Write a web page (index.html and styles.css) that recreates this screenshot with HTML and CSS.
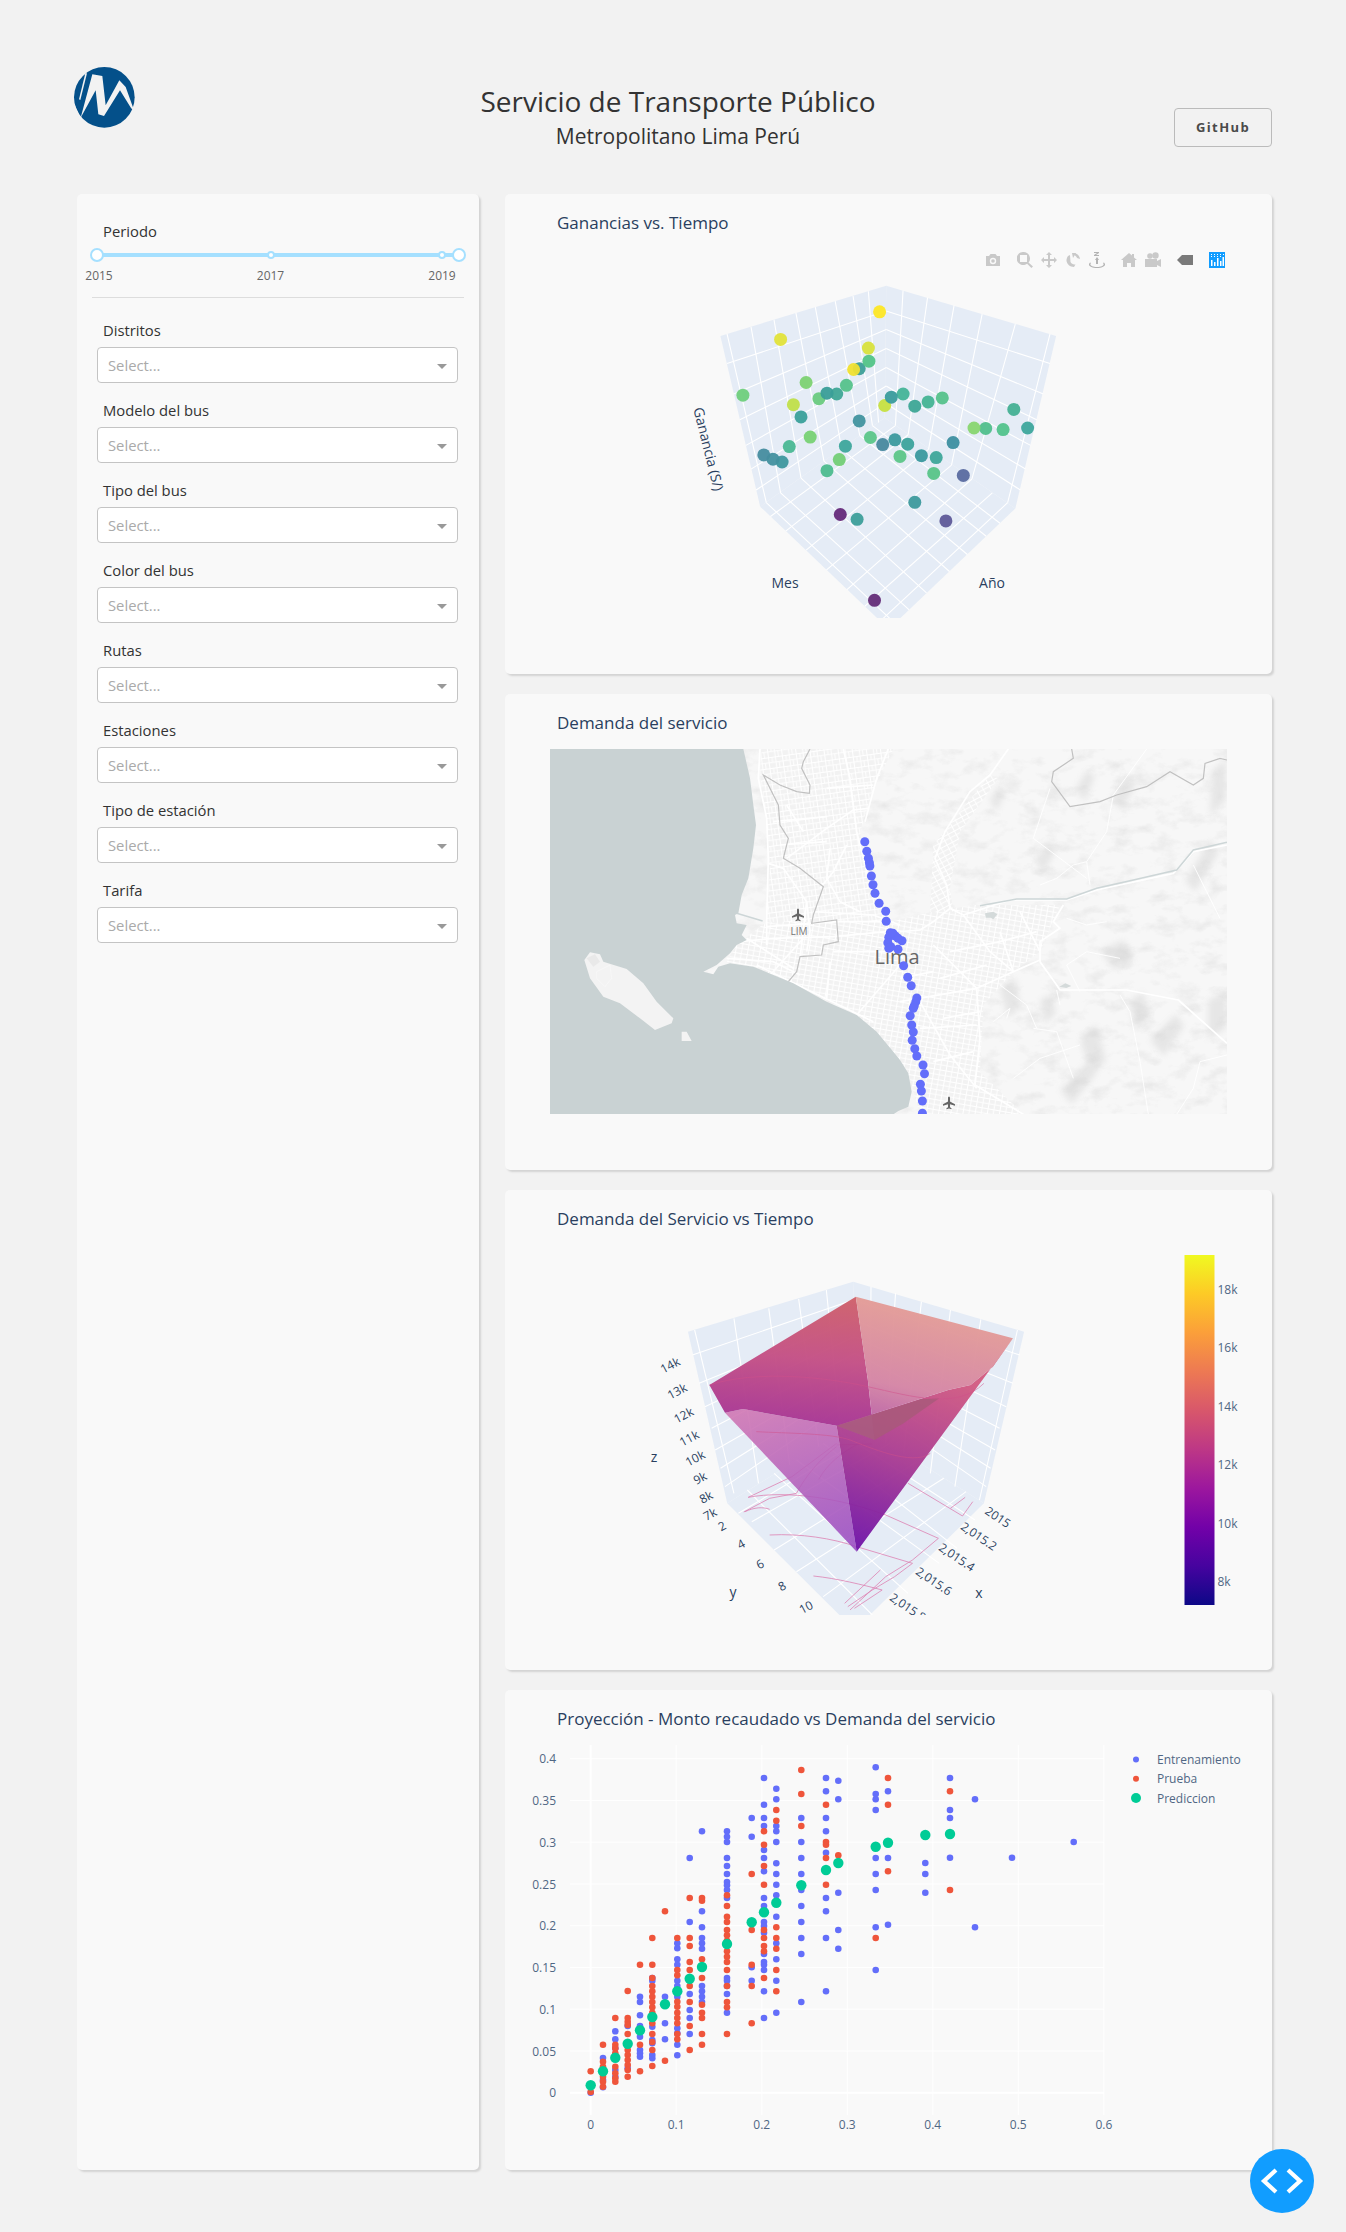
FILE: index.html
```html
<!DOCTYPE html>
<html lang="es">
<head>
<meta charset="utf-8">
<title>Servicio de Transporte Público</title>
<link rel="stylesheet" href="styles.css">
</head>
<body>
<header class="header">
  <svg class="logo" viewBox="42 35 183 183" aria-label="Metropolitano">
    <circle cx="133" cy="126" r="91" fill="#04508a"/>
    <path fill="#f2f2f2" d="M62 187 97 57 127 62 137 150 178 75 197 95 224 170 213 158 180 105 132 182 115 177 107 105Z"/>
    <path fill="#f2f2f2" d="M76 54 81 54 61 134 57 132Z"/>
    <path fill="#f2f2f2" d="M44 148 62 187 56 192 40 160Z"/>
  </svg>
  <div class="heading">
    <h1 class="title">Servicio de Transporte Público</h1>
    <h2 class="subtitle">Metropolitano Lima Perú</h2>
  </div>
  <a class="github">GitHub</a>
</header>

<main class="main">
  <aside class="card sidebar">
    <div class="label period-label">Periodo</div>
    <div class="slider">
      <div class="track"></div>
      <span class="dot dot-a"></span>
      <span class="dot dot-b"></span>
      <span class="handle handle-a"></span>
      <span class="handle handle-b"></span>
      <span class="mark mark-a">2015</span>
      <span class="mark mark-b">2017</span>
      <span class="mark mark-c">2019</span>
    </div>
    <hr class="divider">
    <div class="filter"><div class="label">Distritos</div><div class="select">Select...<i class="caret"></i></div></div>
    <div class="filter"><div class="label">Modelo del bus</div><div class="select">Select...<i class="caret"></i></div></div>
    <div class="filter"><div class="label">Tipo del bus</div><div class="select">Select...<i class="caret"></i></div></div>
    <div class="filter"><div class="label">Color del bus</div><div class="select">Select...<i class="caret"></i></div></div>
    <div class="filter"><div class="label">Rutas</div><div class="select">Select...<i class="caret"></i></div></div>
    <div class="filter"><div class="label">Estaciones</div><div class="select">Select...<i class="caret"></i></div></div>
    <div class="filter"><div class="label">Tipo de estación</div><div class="select">Select...<i class="caret"></i></div></div>
    <div class="filter"><div class="label">Tarifa</div><div class="select">Select...<i class="caret"></i></div></div>
  </aside>

  <section class="charts">
    <article class="card chart">
      <h3 class="chart-title">Ganancias vs. Tiempo</h3>
      <div class="modebar">
        <svg class="mb" viewBox="0 0 16 16"><path d="M1 4h3l1.500-2h5L12 4h3v10H1z"/><circle cx="8" cy="9" r="3.200" fill="#f9f9f9"/><circle cx="8" cy="9" r="1.800"/></svg>
        <svg class="mb mb-gap" viewBox="0 0 16 16"><path d="M6.500 0a6.500 6.500 0 0 1 5 10.600l4.500 4-1.600 1.400-4.300-4.300A6.500 6.500 0 1 1 6.500 0zM3 3v7h7V3z"/></svg>
        <svg class="mb" viewBox="0 0 16 16"><path d="M8 0l3 3H9v4h4V5l3 3-3 3V9H9v4h2l-3 3-3-3h2V9H3v2L0 8l3-3v2h4V3H5z"/></svg>
        <svg class="mb" viewBox="0 0 16 16"><path d="M9 1c3 .5 5.500 2.500 6 6l-3-1c-.5-1.500-1.500-2.500-3-3l1-1zM3 4l2-1 .5 7c1 2 3 2.500 5 2.500L9 15C5 15 2 12 1.500 9 1.400 7 2 5.500 3 4z"/><path d="M7 1h4L8 6z"/></svg>
        <svg class="mb tt" viewBox="0 0 16 16"><path d="M5 0h5v1L7 3h3v1H5V3l3-2H5zM8 5l2 3H9v4H7V8H6zM2 11c-2 2 1 4 6 4s8-2 6-4l1-.500c3 3-1 5.500-7 5.500s-10-2.500-7-5.500z"/></svg>
        <svg class="mb mb-gap" viewBox="0 0 16 16"><path d="M8 1l3 2.600V2h2v3.400L16 8h-2v7h-4v-4H6v4H2V8H0z"/></svg>
        <svg class="mb" viewBox="0 0 16 16"><circle cx="5" cy="4" r="2.800"/><circle cx="10.500" cy="3.500" r="3.200"/><path d="M0 7h12v2l4-2v8l-4-2v2H0z"/></svg>
        <svg class="mb mb-gap tag" viewBox="0 0 16 16"><path d="M5 3h11v10H5L0 8z"/></svg>
        <svg class="mb mb-gap" viewBox="0 0 16 16"><rect width="16" height="16" fill="#119dff"/><path fill="#fff" d="M2 8h1.500v6H2zM5 10h1.500v4H5zM8 6h1.500v8H8zM11 9h1.500v5H11zM13.500 5H15v9h-1.500zM2 2h1v1H2zM5 2h1v1H5zM8 2h1v1H8zM11 2h1v1h-1zM14 2h1v1h-1zM2 4h1v1H2zM5 4h1v1H5zM8 4h1v1H8zM11 4h1v1h-1z"/></svg>
      </div>
      <svg class="plot plot-440" viewBox="505 234 767 440">
        <defs><clipPath id="clip1"><rect x="505" y="234" width="767" height="384"/></clipPath></defs>
        <g clip-path="url(#clip1)">
          <g transform="translate(500 60) scale(.5102 .39526)">
            <polygon class="pane" points="432,698 757,571 754,905 510,1130"/>
            <polygon class="pane" points="757,571 1090,698 1010,1135 754,905"/>
            <polygon class="pane" points="510,1130 754,905 1010,1135 762,1440"/>
            <g class="grid">
              <path d="M445 693 522 1120M492 675 550 1095M537 657 590 1058M580 640 635 1015M618 625 670 985M657 610 705 950M692 597 730 925M722 585 742 917"/>
              <path d="M445 768 757 635M458 845 757 682M470 910 757 730M482 975 757 778M492 1035 757 825M502 1088 755 868"/>
              <path d="M790 583 775 925M838 601 800 948M890 621 840 985M945 643 885 1025M1010 668 925 1060M1078 693 995 1120"/>
              <path d="M1078 768 757 635M1065 845 757 682M1052 910 757 730M1040 975 757 778M1030 1035 757 825M1020 1088 755 868"/>
              <path d="M522 1120 774 1425M550 1095 802 1391M590 1058 836 1348M635 1015 881 1294M670 985 916 1251M705 950 953 1205M730 925 980 1172"/>
              <path d="M995 1120 745 1420M965 1095 715 1382M925 1060 680 1340M885 1025 640 1290M840 985 600 1240M800 948 560 1192M775 925 530 1155"/>
            </g>
          </g>
          <g id="scatter3d"></g>
        </g>
        <text class="ax-13" transform="translate(709 449) rotate(76)" text-anchor="middle">Ganancia (S/)</text>
        <text class="ax-13" x="785" y="582" text-anchor="middle">Mes</text>
        <text class="ax-13" x="992" y="582" text-anchor="middle">Año</text>
      </svg>
    </article>

    <article class="card chart">
      <h3 class="chart-title">Demanda del servicio</h3>
      <svg class="plot plot-436" viewBox="505 734 767 436">
        <defs>
          <clipPath id="clipmap"><rect x="550" y="749" width="677" height="365"/></clipPath>
          <filter id="terrain" x="0" y="0" width="100%" height="100%">
            <feTurbulence type="fractalNoise" baseFrequency=".045 .075" numOctaves="4" seed="11"/>
            <feColorMatrix type="matrix" values="0 0 0 0 .6  0 0 0 0 .6  0 0 0 0 .6  2.400 0 0 0 -1.120"/>
          </filter>
          <filter id="soft"><feGaussianBlur stdDeviation="3"/></filter>
          <pattern id="st-a" width="42" height="33" patternUnits="userSpaceOnUse" patternTransform="rotate(-8)">
            <rect width="42" height="33" fill="#f2f2f2"/>
            <path d="M0 1.500H42M0 17H42M1.500 0V33M22 0V33M32 17V33M12 0V17" stroke="#fff" stroke-width="3"/>
          </pattern>
          <pattern id="st-b" width="36" height="30" patternUnits="userSpaceOnUse" patternTransform="rotate(10)">
            <rect width="36" height="30" fill="#f2f2f2"/>
            <path d="M0 1.500H36M0 16H36M1.500 0V30M19 0V30" stroke="#fff" stroke-width="3"/>
          </pattern>
          <pattern id="st-c" width="39" height="27" patternUnits="userSpaceOnUse" patternTransform="rotate(-28)">
            <rect width="39" height="27" fill="#f2f2f2"/>
            <path d="M0 1.500H39M0 14H39M1.500 0V27M20 0V27" stroke="#fff" stroke-width="3"/>
          </pattern>
        </defs>
        <g clip-path="url(#clipmap)">
          <rect x="550" y="749" width="677" height="365" fill="#f7f7f7"/>
          <rect x="550" y="749" width="677" height="365" filter="url(#terrain)" opacity=".32"/>
          <g filter="url(#soft)" fill="#cfcfcf" opacity=".42">
            <path d="M1075 790l12-20 8 6-10 25zM1110 800l18-24 8 8-14 26zM1212 770l14-10v40l-16 16zM1185 880l26-40 8 12-24 40zM1150 1040l26-26 8 12-20 30zM1080 1040l16-16 10 36-14 16zM1035 860l14-20 8 8-14 26zM1208 1000l18-8v36l-18 12zM990 800l10-16 6 8-10 20zM1000 990l16-12 4 30-12 10zM1100 950l24-10 10 20-20 10zM1060 1090l30-30 6 14-24 30zM1130 1000l14-8 4 24-14 14zM1040 1000l12-6 4 20-12 10z"/>
          </g>
          <g transform="translate(540 745) scale(.33333)">
            <path fill="url(#st-a)" d="M665 12H1060L1000 130 960 260 985 400 1050 540H680L690 360 680 230 660 90Z"/>
            <path fill="url(#st-b)" d="M590 600 680 530H1080L1070 960 950 810 760 715 640 665 560 650Z"/>
            <path fill="url(#st-b)" d="M1050 530 1180 500 1300 480 1560 480 1500 620 1420 680 1330 780 1320 980 1450 1108H1140L1110 1000 1070 940Z"/>
            <path fill="url(#st-c)" d="M1180 300 1350 90 1375 100 1260 260 1230 430 1240 500 1170 500Z"/>
          </g>
          <g transform="translate(540 745) scale(.33333)">
            <g class="road-b">
              <path d="M660 12 655 100 680 220 685 340 680 530 680 600"/>
              <path d="M910 12 930 100 950 260 985 400 1040 530 1050 560"/>
              <path d="M1045 12 1010 100 975 230"/>
              <path d="M740 340 860 250 940 195 985 190"/>
              <path d="M685 355 730 370 800 470 810 560 800 620"/>
              <path d="M870 310 860 400 900 470 960 500"/>
              <path d="M820 500 1000 510 1080 540"/>
              <path d="M680 545 890 530 1040 530"/>
              <path d="M600 590 700 580 880 575 1040 560"/>
              <path d="M560 640 700 650 780 690"/>
              <path d="M620 580 760 670"/>
              <path d="M880 620 1040 620 1090 640"/>
              <path d="M870 650 860 760"/>
              <path d="M1080 660 950 810"/>
              <path d="M690 690 790 580"/>
              <path d="M800 470 780 640"/>
              <path d="M650 660 1000 830"/>
              <path d="M920 300 880 380 840 430"/>
              <path d="M860 130 930 125 1000 120"/>
              <path d="M700 230 860 215"/>
              <path d="M720 300 860 290"/>
              <path d="M740 180 790 260"/>
            </g>
          </g>
          <g transform="translate(900 745) scale(.33333)">
            <g class="road-b">
              <path d="M325 12 270 90 210 140 135 260 105 340 140 420 150 490 100 530 60 555 0 560"/>
              <path d="M190 510 330 465 500 465 590 435 820 385 880 320 981 300"/>
              <path d="M490 480 460 530 480 550 420 590 420 650 470 720 480 735 680 735 835 765 981 895"/>
              <path d="M100 600 230 730 240 880 225 1020 370 1108"/>
              <path d="M0 770 230 730 340 680 420 645"/>
              <path d="M150 490 190 510 270 620 340 680"/>
              <path d="M60 770 150 930 230 1030"/>
              <path d="M150 620 300 590 410 560"/>
              <path d="M120 700 260 660"/>
              <path d="M130 820 240 800"/>
              <path d="M60 850 230 840"/>
              <path d="M100 950 220 920"/>
              <path d="M0 700 100 680"/>
              <path d="M300 560 340 680"/>
              <path d="M360 500 420 620"/>
            </g>
            <g class="road-t">
              <path d="M740 12 640 150 620 260 560 350 570 420"/>
              <path d="M400 280 450 130"/>
              <path d="M400 280 560 400"/>
              <path d="M690 800 720 950 745 1108"/>
              <path d="M470 735 480 780"/>
              <path d="M660 750 690 800"/>
              <path d="M420 420 470 400 520 360 560 350"/>
              <path d="M981 930 900 950 880 1030 830 1108"/>
              <path d="M340 1000 420 940 540 900"/>
              <path d="M280 830 330 790 320 820"/>
              <path d="M400 850 470 860 520 1000"/>
              <path d="M880 360 920 440 960 520"/>
              <path d="M500 520 560 540 620 530"/>
              <path d="M540 740 500 660 560 620 660 640"/>
              <path d="M300 720 380 780 410 850"/>
            </g>
            <path class="river" d="M240 482 350 462 500 462 590 430 700 405 830 375 880 315 981 292"/>
            <path class="border" d="M515 12 520 40 460 80 455 110 510 185 600 170 650 150 740 125 810 80 880 120 910 100 915 55 960 40 981 45"/>
            <path fill="#d4dada" d="M255 505l25-5 12 8-12 15-8-5-15 0zM478 725l18-10 18 8-15 6z"/>
          </g>
          <g transform="translate(540 745) scale(.33333)">
            <path class="river" d="M590 505 668 528"/>
            <path class="border" d="M810 12 790 50 785 70 810 120 808 145 770 140 720 120 670 90 715 180 720 240 745 280 730 340 780 370 850 425 820 510 815 535 890 525 895 590 850 600 845 630 780 635 770 680 745 710"/>
            <path fill="#c9d2d3" d="M30 12H610L630 100 640 180 648 240 640 310 625 400 605 450 595 505 585 510 590 535 620 540 605 570 620 585 590 600 570 625 530 660 490 680 520 688 535 665 570 655 640 665 700 690 760 715 860 770 950 810 1010 860 1060 920 1080 945 1105 985 1115 1040 1105 1085 1075 1098 1060 1108H30Z"/>
            <path fill="#f3f3f3" d="M133 645 150 622 180 628 190 650 260 672 310 715 350 770 400 820 395 835 345 855 300 820 240 775 190 755 150 700ZM425 860 440 860 455 888 425 888Z"/>
            <path fill="none" stroke="#fff" stroke-width="1" d="M170 680 210 660 215 700 195 725 170 700Z"/>
            <path fill="#dfdfdf" opacity=".5" d="M140 640 165 628 180 650 160 665Z"/>
          </g>
          <text class="map-big" x="897" y="956" text-anchor="middle" dominant-baseline="central">Lima</text>
          <text class="map-small" x="799" y="931" text-anchor="middle" dominant-baseline="central">LIM</text>
          <path class="plane" d="M798 908.500c.7 0 1 .8 1 1.700v3.300l5 2.800v1.400l-5-1.500v3l1.500 1.100v1l-2.500-.7-2.500.7v-1l1.500-1.100v-3l-5 1.500v-1.400l5-2.800v-3.300c0-.9.300-1.700 1-1.700z"/>
          <path class="plane" d="M949 1096.500c.7 0 1 .8 1 1.700v3.300l5 2.800v1.400l-5-1.500v3l1.500 1.100v1l-2.500-.7-2.500.7v-1l1.500-1.100v-3l-5 1.500v-1.400l5-2.800v-3.300c0-.9.300-1.700 1-1.700z"/>
          <g id="mapdots"></g>
        </g>
      </svg>
    </article>

    <article class="card chart">
      <h3 class="chart-title">Demanda del Servicio vs Tiempo</h3>
      <svg class="plot plot-440" viewBox="505 1230 767 440">
        <defs>
          <clipPath id="clip3"><rect x="505" y="1230" width="767" height="385"/></clipPath>
          <linearGradient id="plasma" x1="0" y1="1" x2="0" y2="0">
            <stop offset="0" stop-color="#0d0887"/><stop offset=".111" stop-color="#46039f"/><stop offset=".222" stop-color="#7201a8"/><stop offset=".333" stop-color="#9c179e"/><stop offset=".444" stop-color="#bd3786"/><stop offset=".556" stop-color="#d8576b"/><stop offset=".667" stop-color="#ed7953"/><stop offset=".778" stop-color="#fb9f3a"/><stop offset=".889" stop-color="#fdca26"/><stop offset="1" stop-color="#f0f921"/>
          </linearGradient>
          <linearGradient id="faceA" gradientUnits="userSpaceOnUse" x1="560" y1="230" x2="520" y2="660"><stop offset="0" stop-color="#cf6069"/><stop offset=".45" stop-color="#c44f85"/><stop offset="1" stop-color="#a12f97"/></linearGradient>
          <linearGradient id="faceB" gradientUnits="userSpaceOnUse" x1="720" y1="280" x2="620" y2="640"><stop offset="0" stop-color="#e39b97"/><stop offset=".6" stop-color="#d585a5"/><stop offset="1" stop-color="#b45aa6"/></linearGradient>
          <linearGradient id="faceC" gradientUnits="userSpaceOnUse" x1="350" y1="560" x2="540" y2="990"><stop offset="0" stop-color="#cf74b2"/><stop offset="1" stop-color="#9a4cc2"/></linearGradient>
          <linearGradient id="faceD" gradientUnits="userSpaceOnUse" x1="800" y1="470" x2="580" y2="990"><stop offset="0" stop-color="#d35a80"/><stop offset=".5" stop-color="#a83a92"/><stop offset="1" stop-color="#6e12a8"/></linearGradient>
        </defs>
        <g clip-path="url(#clip3)">
          <g transform="translate(600 1220) scale(.44643 .33333)">
            <polygon class="pane" points="197,335 567,185 575,610 285,850"/>
            <polygon class="pane" points="567,185 950,335 860,850 575,610"/>
            <polygon class="pane" points="285,850 575,610 860,850 570,1230"/>
            <g class="grid">
              <path d="M212 330 300 820M300 295 355 790M378 265 425 735M445 237 490 680M507 210 540 640"/>
              <path d="M207 405 567 240M222 490 569 300M235 560 570 350M250 625 571 400M258 690 572 450M270 745 573 490M280 800 574 530"/>
              <path d="M607 200 605 640M662 220 640 670M720 245 680 700M785 270 740 760M853 298 795 800M935 330 850 840"/>
              <path d="M940 405 567 240M925 490 569 300M910 560 570 350M895 625 571 400M885 690 572 450M875 745 573 490M865 800 574 530"/>
              <path d="M330 810 610 1185M390 760 690 1120M440 720 760 1030M500 670 800 985M540 640 840 900"/>
              <path d="M820 815 500 1130M770 775 440 1055M710 725 390 990M650 670 340 905M610 640 310 880"/>
            </g>
            <g class="contour">
              <path d="M332 832 430 770 530 670M322 876 380 835 440 820M380 945C450 940 520 955 575 980L700 1030 660 1070 610 1110 555 1160M478 1068C530 1075 590 1095 632 1110L570 1165M325 875C345 862 365 860 380 868M332 832C420 810 540 835 640 885L758 955 700 1020 640 1070 560 1170M690 790 812 888 835 845M785 865 818 832M548 1150 628 1050"/>
              <path d="M440 820 C460 770 490 720 530 680M490 778C510 730 540 700 580 670M530 675 610 672"/>
            </g>
            <polygon fill="url(#faceC)" opacity=".88" points="280,578 320,567 530,617 575,995"/>
            <polygon fill="url(#faceD)" opacity=".95" points="530,617 780,510 830,495 880,440 925,355 575,995"/>
            <polygon fill="url(#faceA)" opacity=".96" points="573,230 245,495 280,578 320,567 530,617 615,660 600,480"/>
            <polygon fill="url(#faceB)" opacity=".96" points="573,230 925,355 880,440 830,495 780,510 530,617 615,660 600,480"/>
            <polygon fill="#a8597a" opacity=".85" points="530,617 720,537 760,535 680,610 615,660"/>
            <path fill="none" class="thinline" d="M245 495C350 450 500 470 600 500S800 570 860 490M350 635C420 640 520 640 560 660S700 740 740 700"/>
          </g>
        </g>
        <g class="tick-r">
          <text transform="translate(670 1365) rotate(-28)">14k</text>
          <text transform="translate(677 1391) rotate(-28)">13k</text>
          <text transform="translate(683.500 1415) rotate(-28)">12k</text>
          <text transform="translate(689 1438) rotate(-28)">11k</text>
          <text transform="translate(695 1458) rotate(-28)">10k</text>
          <text transform="translate(700 1478) rotate(-28)">9k</text>
          <text transform="translate(706 1497) rotate(-28)">8k</text>
          <text transform="translate(710 1514) rotate(-28)">7k</text>
          <text transform="translate(722 1526) rotate(-28)">2</text>
          <text transform="translate(741 1544) rotate(-28)">4</text>
          <text transform="translate(760 1564) rotate(-28)">6</text>
          <text transform="translate(782 1586) rotate(-28)">8</text>
          <text transform="translate(806 1607) rotate(-28)">10</text>
          <text transform="translate(998 1517) rotate(34)">2015</text>
          <text transform="translate(979 1536) rotate(34)">2,015.2</text>
          <text transform="translate(957 1557) rotate(34)">2,015.4</text>
          <text transform="translate(934 1581) rotate(34)">2,015.6</text>
          <g clip-path="url(#clip3)"><text transform="translate(908 1607) rotate(34)">2,015.8</text></g>
          <text class="ax-title" x="654" y="1456">z</text>
          <text class="ax-title" x="733" y="1591">y</text>
          <text class="ax-title" x="979" y="1592">x</text>
        </g>
        <rect x="1184.500" y="1255" width="30" height="350" fill="url(#plasma)"/>
        <g class="tick-l">
          <text x="1217.500" y="1289">18k</text>
          <text x="1217.500" y="1347.700">16k</text>
          <text x="1217.500" y="1406">14k</text>
          <text x="1217.500" y="1464.500">12k</text>
          <text x="1217.500" y="1523">10k</text>
          <text x="1217.500" y="1581">8k</text>
        </g>
      </svg>
    </article>

    <article class="card chart">
      <h3 class="chart-title">Proyección - Monto recaudado vs Demanda del servicio</h3>
      <svg class="plot plot-440" viewBox="505 1730 767 440">
        <g class="grid-2d">
          <path d="M676.200 1745V2115M761.800 1745V2115M847.300 1745V2115M932.800 1745V2115M1018.300 1745V2115M1103.900 1745V2115"/>
          <path d="M570 1758.700H1104M570 1800.500H1104M570 1842.200H1104M570 1884H1104M570 1925.700H1104M570 1967.500H1104M570 2009.200H1104M570 2051H1104"/>
          <path class="zero" d="M590.700 1745V2115M570 2092.700H1104"/>
        </g>
        <g id="scatter2d"></g>
        <g class="tick-e">
          <text x="556" y="1758.700">0.4</text>
          <text x="556" y="1800.500">0.35</text>
          <text x="556" y="1842.200">0.3</text>
          <text x="556" y="1884">0.25</text>
          <text x="556" y="1925.700">0.2</text>
          <text x="556" y="1967.500">0.15</text>
          <text x="556" y="2009.200">0.1</text>
          <text x="556" y="2051">0.05</text>
          <text x="556" y="2092.700">0</text>
        </g>
        <g class="tick-m">
          <text x="590.700" y="2124">0</text>
          <text x="676.200" y="2124">0.1</text>
          <text x="761.800" y="2124">0.2</text>
          <text x="847.300" y="2124">0.3</text>
          <text x="932.800" y="2124">0.4</text>
          <text x="1018.300" y="2124">0.5</text>
          <text x="1103.900" y="2124">0.6</text>
        </g>
        <circle cx="1136" cy="1759.600" r="3" fill="#636efa"/>
        <circle cx="1136" cy="1778.800" r="3" fill="#ef553b"/>
        <circle cx="1136" cy="1798" r="5" fill="#00cc96"/>
        <g class="tick-l">
          <text x="1157" y="1759.600">Entrenamiento</text>
          <text x="1157" y="1778.800">Prueba</text>
          <text x="1157" y="1798">Prediccion</text>
        </g>
      </svg>
    </article>
  </section>
</main>

<button class="fab" aria-label="code">
  <svg viewBox="0 0 64 64" width="64" height="64"><path fill="none" stroke="#fff" stroke-width="4.200" d="M26 21 14 32 26 43M38 21 50 32 38 43"/></svg>
</button>
<script src="chart.js"></script>
</body>
</html>
```

FILE: styles.css
```css
* { box-sizing: border-box; }
html, body { margin: 0; padding: 0; }
body {
  background: #f2f2f2;
  font-family: "Open Sans", "Liberation Sans", sans-serif;
  color: #3a3a3a;
  min-height: 2232px;
  padding: 0 74px;
}
.header {
  display: grid;
  grid-template-columns: 61px 1fr 98px;
  height: 194px;
  padding-top: 67px;
  align-items: start;
}
.logo { width: 61px; height: 61px; display: block; }
.heading { text-align: center; padding-left: 47px; padding-top: 14px; }
.title { margin: 0; font-size: 28px; font-weight: 400; line-height: 40px; color: #333; }
.subtitle { margin: 0; font-size: 21px; font-weight: 400; line-height: 30px; color: #333; }
.github {
  display: block;
  margin-top: 41px;
  height: 39px;
  border: 1px solid #bbb;
  border-radius: 4px;
  text-align: center;
  line-height: 37px;
  font-size: 13px;
  font-weight: 700;
  letter-spacing: 1.400px;
  color: #4a4a4a;
}
.main { display: flex; gap: 26px; align-items: stretch; margin-left: 3px; }
.card {
  background: #f9f9f9;
  border-radius: 5px;
  box-shadow: 2px 2px 2px lightgrey;
}
.sidebar { width: 402px; padding-top: 27px; flex: none; }
.label { font-size: 14.800px; line-height: 20px; padding-left: 26px; color: #333; }
.slider { position: relative; height: 51.500px; margin: 4px 0 0 20px; width: 362px; }
.track { position: absolute; left: 0; right: 0; top: 8px; height: 4px; background: #a5e0ff; }
.handle, .dot { position: absolute; border-radius: 50%; background: #fff; border: 2px solid #a5e0ff; }
.handle { width: 14px; height: 14px; top: 3px; }
.dot { width: 8px; height: 8px; top: 6px; }
.handle-a { left: -7px; }
.handle-b { left: 355px; }
.dot-a { left: 170px; }
.dot-b { left: 341px; }
.mark { position: absolute; top: 23px; font-size: 12px; line-height: 16px; color: #666; transform: translateX(-50%); }
.mark-a { left: 2px; }
.mark-b { left: 173.500px; }
.mark-c { left: 345px; }
.divider { margin: 0 15px; border: 0; border-top: 1px solid #ddd; height: 0; }
.filter { margin-top: 22px; margin-bottom: -5px; }
.select {
  position: relative;
  margin: 7px 0 0 20px;
  width: 361px;
  height: 36px;
  border: 1px solid #c4c4c4;
  border-radius: 4px;
  background: #fff;
  font-size: 14.800px;
  line-height: 34px;
  padding-left: 10px;
  color: #aaa;
}
.caret {
  position: absolute;
  right: 10px;
  top: 16px;
  width: 0;
  height: 0;
  border: 5px solid transparent;
  border-top-color: #999;
  border-bottom-width: 0;
}
.charts { width: 767px; flex: none; display: flex; flex-direction: column; gap: 20px; }
.chart { position: relative; }
.chart-title {
  margin: 0;
  padding: 18px 0 0 52px;
  height: 40px;
  font-size: 17px;
  line-height: 22px;
  font-weight: 400;
  color: #2a3f5f;
}
.plot { display: block; width: 767px; }
.plot-440 { height: 440px; }
.plot-436 { height: 436px; }
.modebar {
  position: absolute;
  top: 58px;
  left: 480px;
  display: flex;
  gap: 8px;
  align-items: center;
  z-index: 2;
}
.mb { width: 16px; height: 16px; fill: #c9c9c9; display: block; }
.mb-gap { margin-left: 8px; }
.tag { fill: #7a7a7a; }
.tt { fill: #b3b3b3; }
.pane { fill: #e5ecf6; }
.grid path { fill: none; stroke: #fff; stroke-width: 1.100; vector-effect: non-scaling-stroke; }
.contour path { fill: none; stroke: #dd82b3; stroke-width: .8; vector-effect: non-scaling-stroke; }
.thinline { stroke: #d0508a; stroke-width: 1; vector-effect: non-scaling-stroke; opacity: .5; }
.ax-13 { font-size: 14px; fill: #2a3f5f; dominant-baseline: central; }
.tick-r text, .tick-l text, .tick-e text, .tick-m text { font-size: 12px; fill: #506784; dominant-baseline: central; }
.tick-r text { text-anchor: middle; fill: #2a3f5f; }
.tick-r .ax-title { font-size: 14px; }
.tick-l text { text-anchor: start; }
.tick-e text { text-anchor: end; }
.tick-m text { text-anchor: middle; }
.grid-2d path { fill: none; stroke: #fff; stroke-width: 1; }
.grid-2d .zero { stroke-width: 2; }
.road-b path { fill: none; stroke: #fff; stroke-width: 1.700; vector-effect: non-scaling-stroke; stroke-linejoin: round; }
.road-t path { fill: none; stroke: #fff; stroke-width: .9; vector-effect: non-scaling-stroke; stroke-linejoin: round; }
.river { fill: none; stroke: #cdd6d7; stroke-width: 1.500; vector-effect: non-scaling-stroke; }
.border { fill: none; stroke: #b8b8b8; stroke-width: 1.200; vector-effect: non-scaling-stroke; opacity: .85; }
.map-big { font-size: 20px; fill: #666; }
.map-small { font-size: 10px; fill: #777; }
.plane { fill: #666; }
.fab {
  position: fixed;
  right: 32px;
  bottom: 19px;
  width: 64px;
  height: 64px;
  padding: 0;
  border: 0;
  border-radius: 50%;
  background: #119dff;
}
.fab svg { display: block; }
```

FILE: chart.js
```javascript
(function () {
  var NS = 'http://www.w3.org/2000/svg';
  function dot(parent, x, y, r, fill, opacity) {
    var c = document.createElementNS(NS, 'circle');
    c.setAttribute('cx', x.toFixed(1));
    c.setAttribute('cy', y.toFixed(1));
    c.setAttribute('r', r);
    c.setAttribute('fill', fill);
    if (opacity) c.setAttribute('opacity', opacity);
    parent.appendChild(c);
  }

  var s3 = [
    [667,1150,'#64297a'],[734,1367,'#642d78'],[874,1166,'#5e5a98'],[813,1119,'#3d9a9d'],[700,1162,'#3d9f9a'],
    [908,1051,'#5a6ca0'],[850,1046,'#57c488'],[641,1039,'#4dbc8e'],[665,1011,'#73cf76'],[553,1017,'#3e989e'],
    [535,1010,'#43919f'],[517,999,'#468d9f'],[855,1006,'#3da69a'],[826,1001,'#3a999e'],[784,1003,'#5cc688'],
    [888,968,'#3d8fa0'],[799,972,'#3ca39c'],[750,973,'#48899e'],[774,961,'#3c9a9e'],[677,977,'#3da79c'],
    [567,978,'#4ab893'],[726,955,'#5bc689'],[608,954,'#78d274'],[704,913,'#41939f'],[1034,931,'#3da79c'],
    [986,935,'#52c38c'],[952,932,'#50bf8c'],[929,931,'#88d670'],[1007,884,'#44b094'],[754,874,'#c6e040'],
    [867,855,'#55c28b'],[839,865,'#45b493'],[813,876,'#3da696'],[790,845,'#45b498'],[767,853,'#3a9c9c'],
    [590,903,'#3aa09a'],[575,872,'#c0df4a'],[625,857,'#6ccb80'],[660,845,'#3fa696'],[641,843,'#3a9e98'],
    [476,848,'#6fcf7c'],[679,823,'#55c28b'],[600,816,'#7dd272'],[704,781,'#3d9f98'],[693,783,'#f0e030'],
    [723,762,'#52c487'],[722,729,'#d8e13d'],[550,707,'#e1e33a'],[744,637,'#fde725']
  ];
  var g3 = document.getElementById('scatter3d');
  s3.forEach(function (p) { dot(g3, 500 + p[0] / 1.96, 60 + p[1] / 2.53, 6.5, p[2], .95); });

  var md = [[715,455],[719,484],[722,505],[724,518],[725,528],[728,558],[731,584],[735,610],[743,640],[756,664],[757,694],
    [765,728],[762,742],[775,738],[788,752],[770,730],[780,745],[760,758],[766,770],[762,775],[780,778],[791,827],[799,862],[806,887],
    [817,924],[815,935],[812,947],[810,955],[804,977],[807,1005],[810,1026],[808,1051],[813,1076],[817,1098],[829,1125],
    [832,1151],[824,1183],[826,1203],[828,1233],[828,1270]];
  var gm = document.getElementById('mapdots');
  md.forEach(function (p) { dot(gm, 500 + p[0] / 1.96, 690 + p[1] / 3, 4.5, '#636efa'); });

  var cols = [
    [152,[1058],[994,1056],1036],
    [189,[954,1042,1020],[914,965,980,995,1010,1025,1040],994],
    [226,[874,898,925,990,1010],[834,914,925,940,980,1000,1015,1025],953],
    [263,[858,985],[753,834,845,855,882,930,945,960,975,990,1010],911],
    [300,[770,786,826,858,890,930,940,950],[674,914,994],871],
    [337,[714,722,860,900,910,945,955],[594,674,714,738,754,770,786,802,818,850,882,906,930,978],831],
    [375,[770,850,898],[514,962],793],
    [412,[610,625,658,674,722,738,770,865,880,914,946],[594,690,706,785,800,818,834,850,882,898],754],
    [449,[354,546,762,810,834,882],[474,594,618,666,690,738,786,858,930],716],
    [486,[274,514,562,594,610,626,738,754,770,786],[474,482,658,714,794,818,834,882,914],681],
    [561,[274,290,306,354,378,402,426,436,450,474,818,714,722,738,762],[466,498,530,546,570,586,602,634,650,666,690,738,786,802,882],612],
    [635,[234,290,682,722],[402,570,674,738,850],547],
    [672,[114,194,234,258,330,354,394,474,498,546,558,578,642,666,674,690,754,834],[274,314,378,434,570,594,618,634,714],517],
    [709,[146,178,258,274,306,370,402,434,466,482,530,610,658,722,818],[210,242,562,594,626,690,754],488],
    [784,[234,306,354,402,450,498,546,594,642,786],[90,162,258],436],
    [858,[114,154,234,274,338,474,514,594,754],[194,306,314,354,434],390],
    [895,[122,178,458,570,626],[346],369],
    [1007,[82,162,178,210,354,402,450,562,690],[594],320],
    [1044,[154,354,554],[114,194,394],308],
    [1156,[369,402,458],[],285],
    [1230,[114,210,234,353],[154,450],282],
    [1305,[178,562],[],null],
    [1416,[353],[],null],
    [1601,[306],[],null]
  ];
  var g = document.getElementById('scatter2d');
  function X(v) { return 540 + v / 3; }
  function Y(v) { return 1740 + v / 3; }
  cols.forEach(function (c) { c[1].forEach(function (y) { dot(g, X(c[0]), Y(y), 3.3, '#636efa'); }); });
  cols.forEach(function (c) { c[2].forEach(function (y) { dot(g, X(c[0]), Y(y), 3.3, '#ef553b'); }); });
  cols.forEach(function (c) { if (c[3] !== null) dot(g, X(c[0]), Y(c[3]), 5.2, '#00cc96'); });
})();
```
